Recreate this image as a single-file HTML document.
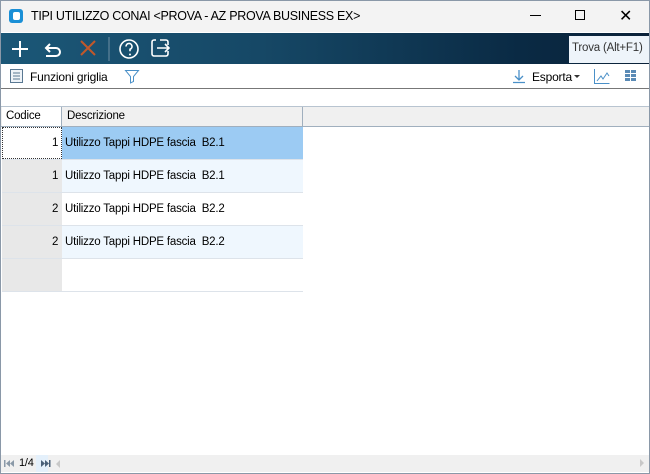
<!DOCTYPE html>
<html><head><style>
*{margin:0;padding:0;box-sizing:border-box}
body{width:650px;height:474px;position:relative;background:#fff;font-family:"Liberation Sans",sans-serif;overflow:hidden}
.a{position:absolute}
.t{font-size:11.5px;color:#000;white-space:nowrap;letter-spacing:-0.2px}
</style></head><body>
<div class="a" style="left:0;top:0;width:650px;height:474px;border:1px solid #8a98a8"></div>
<div class="a" style="left:1px;top:1px;width:648px;height:31px;background:#f3f3f3"></div>
<div class="a" style="left:9px;top:9px;width:14px;height:14px;background:#1a8fd6;border-radius:3px"></div>
<div class="a" style="left:13px;top:12px;width:7px;height:8px;background:#fff;border-radius:2px"></div>
<div class="a t" style="left:31px;top:9px;font-size:12.5px;letter-spacing:-0.3px">TIPI UTILIZZO CONAI &lt;PROVA - AZ PROVA BUSINESS EX&gt;</div>
<div class="a" style="left:530px;top:15px;width:11px;height:1px;background:#000"></div>
<div class="a" style="left:575px;top:10px;width:10px;height:10px;border:1px solid #000"></div>
<div class="a t" style="left:619px;top:6px;font-size:16px">✕</div>
<div class="a" style="left:1px;top:33px;width:648px;height:31px;background:linear-gradient(90deg,#1b5777 0%,#164866 40%,#0a2a44 80%,#0b2239 100%)"></div>
<svg class="a" style="left:0;top:33px" width="200" height="31">
<g stroke="#fff" stroke-width="2" fill="none">
<path d="M20 8v16M12 16h16"/>
<path d="M50 11l-4 4 4 4M46 15h10a4 4 0 0 1 0 8h-10"/>
<circle cx="129" cy="16" r="9" stroke-width="1.6"/>
<path d="M126 13.5a3 3 0 1 1 4 2.8v2" stroke-width="1.6"/>
<path d="M156 7h-2a2 2 0 0 0-2 2v12a2 2 0 0 0 2 2h12a2 2 0 0 0 2-2v-3M168 12v-3a2 2 0 0 0-2-2h-6M157 15h12M165 11l4 4-4 4" stroke-width="1.6"/>
</g>
<circle cx="130" cy="21.5" r="1" fill="#fff"/>
<path d="M81 8l14 14M95 8l-14 14" stroke="#c2582a" stroke-width="2"/>
<path d="M109 4v24" stroke="#6f8fa5" stroke-width="1"/>
</svg>
<div class="a t" style="left:569px;top:36px;width:80px;height:27px;background:#eef4fa;padding:6px 0 0 3px;font-size:11.5px;color:#333">Trova (Alt+F1)</div>
<div class="a" style="left:1px;top:64px;width:648px;height:25px;background:#fff;border-bottom:1px solid #777"></div>
<svg class="a" style="left:9px;top:68px" width="16" height="16"><rect x="1.5" y="1.5" width="12" height="13" fill="#eef3f8" stroke="#5a7892"/><path d="M4 5h7M4 8h7M4 11h7" stroke="#5a7892"/></svg>
<div class="a t" style="left:30px;top:70px;font-size:12px">Funzioni griglia</div>
<svg class="a" style="left:124px;top:68px" width="16" height="16"><path d="M1.5 2.5h13l-5 6v5l-3 1.5v-6.5z" fill="none" stroke="#4a90c8"/></svg>
<svg class="a" style="left:511px;top:68px" width="16" height="16"><path d="M8 2v10M4 8l4 4 4-4M2 14.5h12" fill="none" stroke="#4a90c8" stroke-width="1.3"/></svg>
<div class="a t" style="left:532px;top:70px;font-size:12px">Esporta</div>
<div class="a" style="left:574px;top:75px;border-left:3px solid transparent;border-right:3px solid transparent;border-top:3px solid #333"></div>
<svg class="a" style="left:593px;top:68px" width="18" height="17"><path d="M1.5 1v14.5h15" fill="none" stroke="#4a90c8"/><path d="M4 13l4-5 2 3 4-6 2 3" fill="none" stroke="#4a90c8"/></svg>
<svg class="a" style="left:624px;top:69px" width="14" height="14"><g fill="#5a8ab5"><rect x="1" y="1" width="5" height="3"/><rect x="7" y="1" width="5" height="3"/><rect x="1" y="5" width="5" height="3"/><rect x="7" y="5" width="5" height="3"/><rect x="1" y="9" width="5" height="3"/><rect x="7" y="9" width="5" height="3"/></g></svg>
<div class="a" style="left:1px;top:106px;width:648px;height:21px;background:#f0f0f0;border-top:1px solid #b8c4d0;border-bottom:1px solid #a0afbe"></div>
<div class="a" style="left:2px;top:107px;width:60px;height:19px;background:#fff;border-right:1px solid #a0afbe"></div>
<div class="a" style="left:302px;top:107px;width:1px;height:19px;background:#a0afbe"></div>
<div class="a t" style="left:6px;top:110px">Codice</div>
<div class="a t" style="left:67px;top:110px">Descrizione</div>
<div class="a" style="left:2px;top:127px;width:60px;height:164px;background:#e8e8e8"></div>
<div class="a" style="left:62px;top:127px;width:241px;height:32px;background:#9ccbf3"></div>
<div class="a" style="left:62px;top:160px;width:241px;height:32px;background:#eff7fe"></div>
<div class="a" style="left:62px;top:226px;width:241px;height:32px;background:#eff7fe"></div>
<div class="a" style="left:2px;top:127px;width:60px;height:32px;background:#fff;border:1px dotted #333"></div>
<div class="a" style="left:2px;top:159px;width:301px;height:1px;background:#dde3ea"></div>
<div class="a" style="left:2px;top:192px;width:301px;height:1px;background:#dde3ea"></div>
<div class="a" style="left:2px;top:225px;width:301px;height:1px;background:#dde3ea"></div>
<div class="a" style="left:2px;top:258px;width:301px;height:1px;background:#dde3ea"></div>
<div class="a" style="left:2px;top:291px;width:301px;height:1px;background:#dde3ea"></div>
<div class="a t" style="left:52px;top:137px">1</div><div class="a t" style="left:65px;top:137px">Utilizzo Tappi HDPE fascia&nbsp; B2.1</div>
<div class="a t" style="left:52px;top:170px">1</div><div class="a t" style="left:65px;top:170px">Utilizzo Tappi HDPE fascia&nbsp; B2.1</div>
<div class="a t" style="left:52px;top:203px">2</div><div class="a t" style="left:65px;top:203px">Utilizzo Tappi HDPE fascia&nbsp; B2.2</div>
<div class="a t" style="left:52px;top:236px">2</div><div class="a t" style="left:65px;top:236px">Utilizzo Tappi HDPE fascia&nbsp; B2.2</div>
<div class="a" style="left:1px;top:455px;width:648px;height:17px;background:#f0f0f0"></div>
<div class="a" style="left:36px;top:455px;width:12px;height:17px;background:#e4f0fb"></div>
<svg class="a" style="left:3px;top:458px" width="60" height="12"><g fill="#8a99a8"><rect x="1" y="2" width="1.5" height="7"/><path d="M7 2v7l-4-3.5z"/><path d="M11 2v7l-4-3.5z"/></g><g fill="#4a6078"><path d="M38 2v7l4-3.5z"/><path d="M42 2v7l4-3.5z"/><rect x="46" y="2" width="1.5" height="7"/></g><path d="M57 2v8l-4-4z" fill="#c8c8c8"/></svg>
<div class="a t" style="left:19px;top:457px;font-size:11px">1/4</div>
<div class="a" style="left:640px;top:459px;border-top:4px solid transparent;border-bottom:4px solid transparent;border-left:4px solid #c8c8c8"></div>
</body></html>
